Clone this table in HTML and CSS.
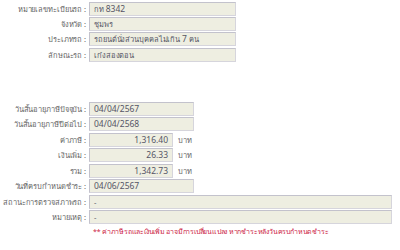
FILE: index.html
```html
<!DOCTYPE html>
<html lang="th">
<head>
<meta charset="utf-8">
<link rel="stylesheet" href="styles.css">
</head>
<body>
<div class="page">
  <div class="form top">
    <div class="lbl">หมายเลขทะเบียนรถ :</div><div class="val"><span class="box w-md">กท <span class="n">8342</span></span></div>
    <div class="lbl">จังหวัด :</div><div class="val"><span class="box w-md">ชุมพร</span></div>
    <div class="lbl">ประเภทรถ :</div><div class="val"><span class="box w-md">รถยนต์นั่งส่วนบุคคลไม่เกิน <span class="n">7</span> คน</span></div>
    <div class="lbl">ลักษณะรถ :</div><div class="val"><span class="box w-md">เก๋งสองตอน</span></div>
  </div>
  <div class="form bottom">
    <div class="lbl">วันสิ้นอายุภาษีปัจจุบัน :</div><div class="val"><span class="box w-sm n">04/04/2567</span></div>
    <div class="lbl">วันสิ้นอายุภาษีปีต่อไป :</div><div class="val"><span class="box w-sm n">04/04/2568</span></div>
    <div class="lbl">ค่าภาษี :</div><div class="val"><span class="box w-xs num n">1,316.40</span><span class="unit">บาท</span></div>
    <div class="lbl">เงินเพิ่ม :</div><div class="val"><span class="box w-xs num n">26.33</span><span class="unit">บาท</span></div>
    <div class="lbl">รวม :</div><div class="val"><span class="box w-xs num n">1,342.73</span><span class="unit">บาท</span></div>
    <div class="lbl">วันที่ครบกำหนดชำระ :</div><div class="val"><span class="box w-sm n">04/06/2567</span></div>
    <div class="lbl">สถานะการตรวจสภาพรถ :</div><div class="val"><span class="box w-lg">-</span></div>
    <div class="lbl">หมายเหตุ :</div><div class="val"><span class="box w-lg">-</span></div>
    <div class="lbl"></div><div class="note">** ค่าภาษีรถและเงินเพิ่ม อาจมีการเปลี่ยนแปลง หากชำระหลังวันครบกำหนดชำระ</div>
  </div>
</div>
</body>
</html>
```
FILE: styles.css
```css
html, body {
  margin: 0;
  padding: 0;
  background: #ffffff;
}
body {
  font-family: Tahoma, "Noto Sans", "DejaVu Sans", sans-serif;
  font-size: 7.5px;
  letter-spacing: -0.1px;
  color: #555555;
}
.page {
  padding-top: 2px;
}
.form {
  display: grid;
  grid-template-columns: 86px 1fr;
  column-gap: 3px;
  align-items: center;
}
.top {
  grid-auto-rows: 14px;
  row-gap: 1.2px;
}
.bottom {
  margin-top: 40px;
  grid-auto-rows: 14px;
  row-gap: 1.5px;
}
.lbl {
  text-align: right;
  color: #666666;
  white-space: nowrap;
  line-height: 14px;
}
.val {
  display: flex;
  align-items: center;
  height: 14px;
}
.box {
  box-sizing: border-box;
  height: 14px;
  line-height: 12px;
  padding: 0 4px;
  background: #eeeee1;
  border: 1px solid #c3c2cc;
  border-right-color: #d6d5dc;
  border-bottom-color: #d6d5dc;
  color: #555566;
  white-space: nowrap;
  overflow: hidden;
}
.n {
  font-size: 8.5px;
  letter-spacing: 0;
}
.w-md { width: 147px; }
.w-sm { width: 105px; }
.w-xs { width: 84px; }
.w-lg { width: 303px; }
.num { text-align: right; }
.unit {
  margin-left: 5px;
  color: #666666;
}
.note {
  grid-column: 2;
  margin-top: -3px;
  padding-left: 4px;
  color: #cc2244;
  font-size: 7px;
  letter-spacing: -0.2px;
  white-space: nowrap;
}
```
